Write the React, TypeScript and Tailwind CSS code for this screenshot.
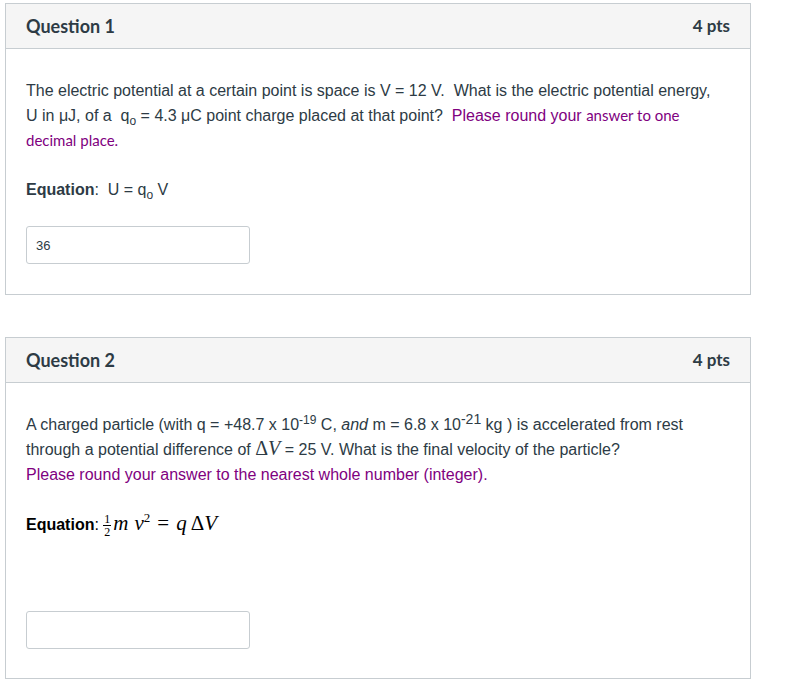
import React from "react";

const sans = "font-['Liberation_Sans',Arial,sans-serif]";
const lato = "font-['Lato',sans-serif]";
const serif = "font-['Liberation_Serif','Times_New_Roman',serif]";

function CardHeader({ title, pts }: { title: string; pts: string }) {
  return (
    <div className="h-[45px] bg-[#f5f5f5] border-b border-[#c7cdd1] px-5 flex items-center justify-between">
      <h2 className={`${lato} text-[18px] font-bold text-[#2d3b45]`}>{title}</h2>
      <span className={`${lato} text-[17px] font-bold text-[#2d3b45]`}>{pts}</span>
    </div>
  );
}

function AnswerBox({ value }: { value?: string }) {
  return (
    <input
      type="text"
      readOnly
      value={value ?? ""}
      className={`${sans} block w-[224px] h-[38px] px-[9px] border border-[#c7cdd1] rounded-[3px] text-[13px] text-[#2d3b45] bg-white outline-none`}
    />
  );
}

// small inline helpers instead of <sub>/<sup> (preflight shifts those)
function Sub({ children }: { children: React.ReactNode }) {
  return <span className="relative top-[4px] text-[12px] leading-none">{children}</span>;
}

function Sup({ children }: { children: React.ReactNode }) {
  return <span className="relative top-[-6px] text-[12px] leading-none">{children}</span>;
}

export default function App() {
  return (
    <div className="w-[792px] h-[683px] bg-white pl-[5px] pt-[3px] overflow-hidden">
      {/* Question 1 */}
      <div className="w-[746px] border border-[#c7cdd1] bg-white">
        <CardHeader title="Question 1" pts="4 pts" />
        <div className={`${sans} px-5 pt-[29px] pb-[30px] text-[16px] leading-[25px] text-[#2d3b45]`}>
          <p>
            The electric potential at a certain point is space is V = 12 V.&nbsp; What is the electric potential energy,
            <br />
            U in μJ, of a&nbsp; q<Sub>o</Sub> = 4.3 μC point charge placed at that point?&nbsp;{" "}
            <span className="text-[#800080]">Please round your </span>
            <span className={`${lato} text-[15px] text-[#800080]`}>answer to one</span>
            <br />
            <span className={`${lato} text-[15px] text-[#800080]`}>decimal place.</span>
          </p>
          <p className="mt-[24px]">
            <span className="font-bold">Equation</span>:&nbsp; U = q<Sub>o</Sub> V
          </p>
          <div className="mt-[24px]">
            <AnswerBox value="36" />
          </div>
        </div>
      </div>

      {/* Question 2 */}
      <div className="mt-[42px] w-[746px] border border-[#c7cdd1] bg-white">
        <CardHeader title="Question 2" pts="4 pts" />
        <div className={`${sans} px-5 pt-[29px] pb-[29px] text-[16px] leading-[25px] text-[#2d3b45]`}>
          <p>
            A charged particle (with q = +48.7 x 10<Sup>-19</Sup> C, <em>and</em> m = 6.8 x 10
            <span className="relative top-[-6px] text-[14px] leading-none">-21</span> kg ) is accelerated from rest
            <br />
            through a potential difference of{" "}
            <span className={`${serif} text-[20px] leading-none`}>
              Δ<i>V</i>
            </span>{" "}
            = 25 V. What is the final velocity of the particle?
            <br />
            <span className="text-[#800080]">Please round your answer to the nearest whole number (integer).</span>
          </p>
          <p className="mt-[25px] text-black">
            <span className="font-bold">Equation</span>:{" "}
            <span className={`${serif} text-[21px] leading-none`}>
              <span className="inline-flex flex-col items-center align-[7px] text-[12px] leading-[10px] mr-[2px]">
                <span className="border-b border-black px-[1px] pb-[1px]">1</span>
                <span className="pt-[1px]">2</span>
              </span>
              <i>m</i>
              <i className="ml-[6px]">v</i>
              <span className="relative top-[-8px] text-[13px]">2</span>
              <span className="mx-[7px]">=</span>
              <i>q</i>
              <span className="ml-[4px]">Δ</span>
              <i>V</i>
            </span>
          </p>
          <div className="mt-[74px]">
            <AnswerBox />
          </div>
        </div>
      </div>
    </div>
  );
}
